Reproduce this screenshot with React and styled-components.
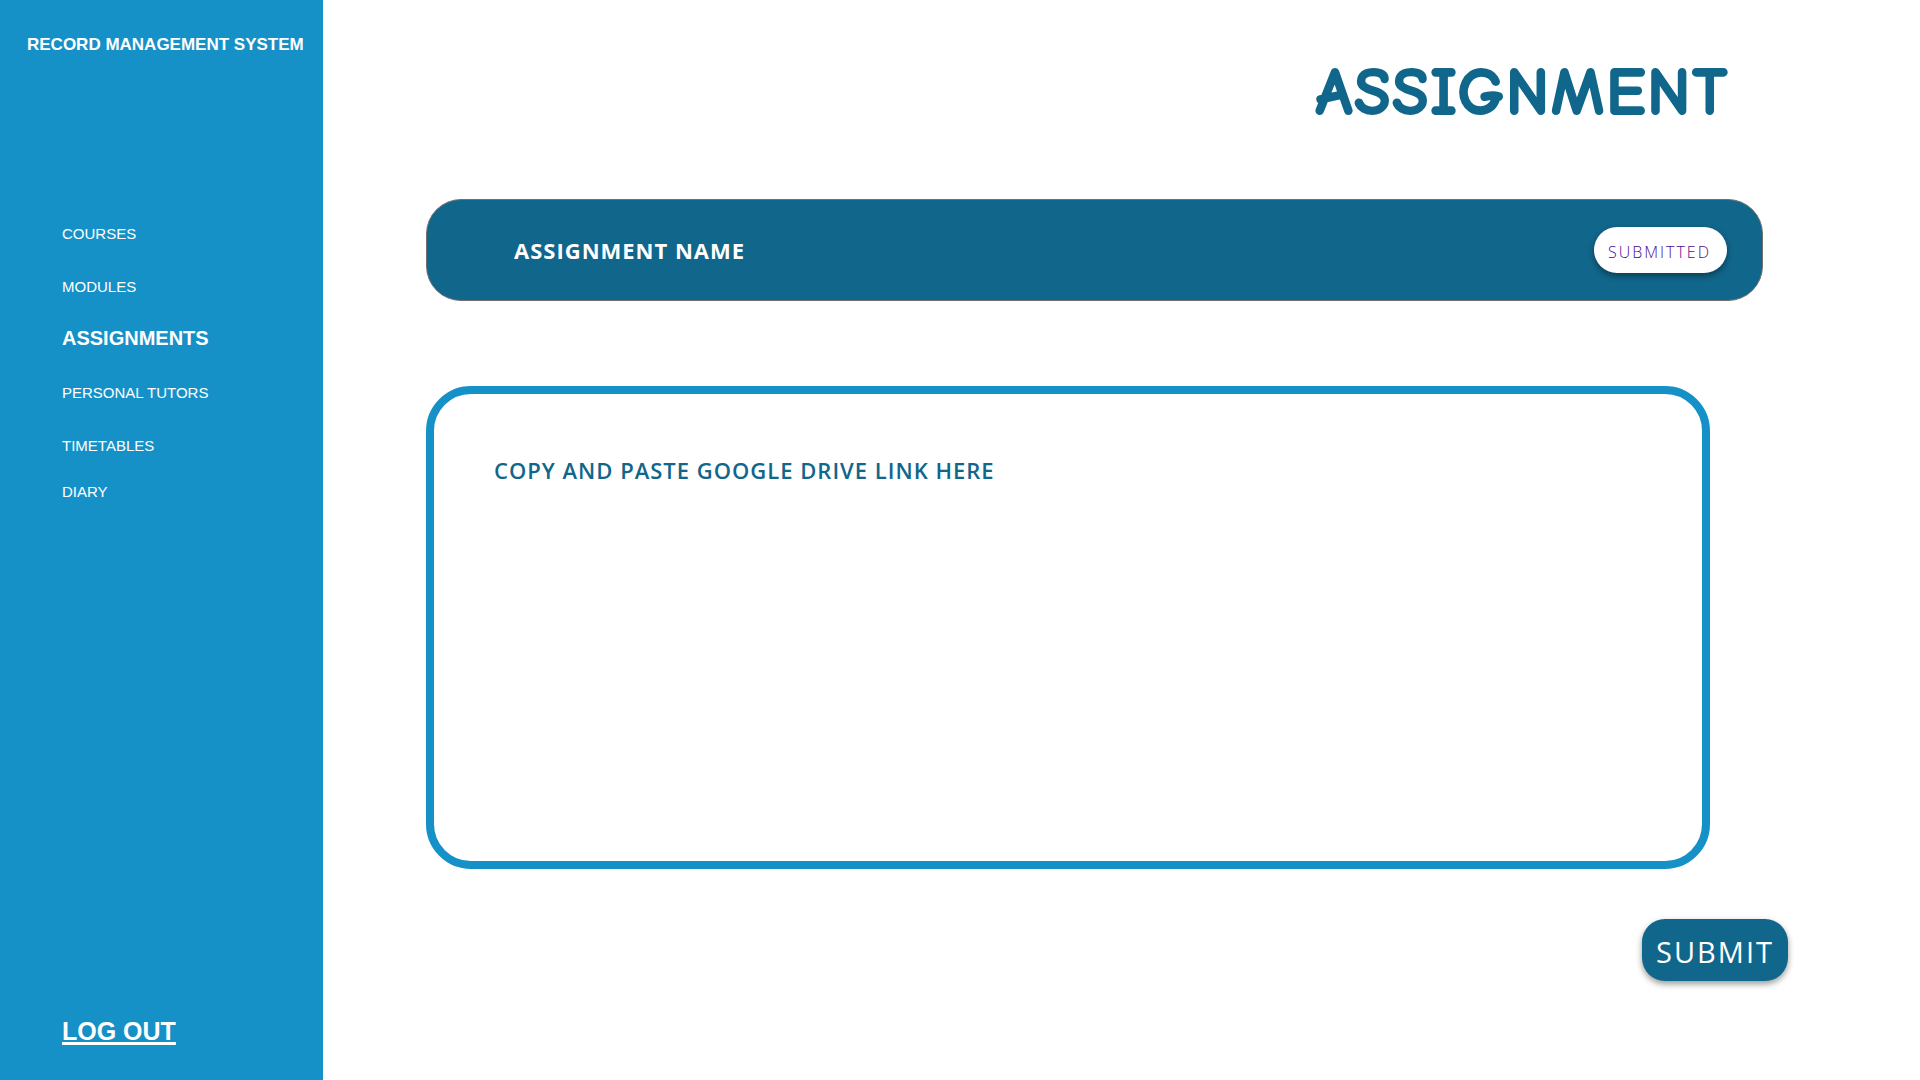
import React from "react";
import styled, { createGlobalStyle } from "styled-components";

const BLUE = "#1591c8";
const DEEP = "#11668b";
const SANS = `"Liberation Sans", Arial, sans-serif`;
const HUMANIST = `"Open Sans", "Noto Sans", sans-serif`;

const GlobalStyle = createGlobalStyle`
  *, *::before, *::after { box-sizing: border-box; }
  body { margin: 0; background: #fff; }
`;

const Page = styled.div`
  display: flex;
  min-height: 100vh;
`;

const Sidebar = styled.aside`
  display: flex;
  flex-direction: column;
  flex: 0 0 323px;
  padding: 33px 0;
  background: ${BLUE};
  color: #fff;
  font-family: ${SANS};
`;

const Brand = styled.div`
  padding-left: 27px;
  font-size: 17px;
  font-weight: 700;
  line-height: 24px;
  white-space: nowrap;
`;

const NavList = styled.ul`
  margin: 150px 0 0;
  padding: 0 0 0 62px;
  list-style: none;
`;

const NavItem = styled.li`
  font-size: 15px;
  line-height: ${(p) => (p.$compact ? "39px" : "53px")};
`;

const NavLink = styled.a`
  color: inherit;
  font-size: ${(p) => (p.$active ? "20px" : "15px")};
  font-weight: ${(p) => (p.$active ? 700 : 400)};
  line-height: 1;
  text-decoration: none;
`;

const LogOut = styled.a`
  align-self: flex-start;
  margin: auto 0 0 62px;
  color: inherit;
  font-size: 25px;
  font-weight: 700;
  line-height: 32px;
  text-decoration: underline;
  text-decoration-thickness: 3px;
  text-underline-offset: 2px;
  text-decoration-skip-ink: none;
`;

const Main = styled.main`
  display: flex;
  flex: 1;
  flex-direction: column;
  min-width: 0;
  padding: 51px 132px 48px 103px;
  font-family: ${HUMANIST};
`;

const Title = styled.h1`
  align-self: flex-end;
  margin: 0 59px 0 0;
  color: ${DEEP};
  font-family: "Comic Sans MS", "Comic Neue", ${HUMANIST};
  font-size: 66px;
  font-weight: 700;
  letter-spacing: 2px;
  line-height: 84px;
  -webkit-text-stroke: 2px ${DEEP};
`;

const AssignmentCard = styled.section`
  display: flex;
  align-items: center;
  justify-content: space-between;
  margin: 64px 25px 0 0;
  padding: 27px 35px 27px 87px;
  border: 1px solid #707070;
  border-radius: 35px;
  background: ${DEEP};
`;

const AssignmentName = styled.h2`
  margin: 0;
  color: #fff;
  font-size: 22px;
  font-weight: 700;
  letter-spacing: 1px;
  line-height: 32px;
`;

const Action = styled.button`
  border: 0;
  font-family: inherit;
  box-shadow: 0 3px 6px rgba(0, 0, 0, 0.4);
  cursor: pointer;
`;

const StatusButton = styled(Action)`
  padding: 4px 16px 0 14px;
  border-radius: 23px;
  background: #fff;
  color: #4d0a94;
  font-size: 16px;
  font-weight: 300;
  letter-spacing: 2px;
  line-height: 42px;
`;

const LinkField = styled.textarea`
  display: block;
  height: 483px;
  margin: 85px 78px 0 0;
  padding: 60px;
  border: 8px solid ${BLUE};
  border-radius: 45px;
  outline: 0;
  resize: none;
  background: #fff;
  color: ${DEEP};
  font-family: inherit;
  font-size: 22px;
  font-weight: 600;
  letter-spacing: 1px;
  line-height: 32px;

  &::placeholder {
    color: inherit;
    opacity: 1;
  }
`;

const SubmitButton = styled(Action)`
  align-self: flex-end;
  margin-top: 50px;
  padding: 4px 14px 0;
  border-radius: 23px;
  background: ${DEEP};
  color: #fff;
  font-size: 29px;
  font-weight: 400;
  letter-spacing: 2px;
  line-height: 58px;
`;

const links = [
  { label: "COURSES" },
  { label: "MODULES" },
  { label: "ASSIGNMENTS", active: true },
  { label: "PERSONAL TUTORS" },
  { label: "TIMETABLES" },
  { label: "DIARY", compact: true },
];

export default function App() {
  return (
    <>
      <GlobalStyle />
      <Page>
        <Sidebar>
          <Brand>RECORD MANAGEMENT SYSTEM</Brand>
          <nav>
            <NavList>
              {links.map(({ label, active, compact }) => (
                <NavItem key={label} $compact={compact}>
                  <NavLink href="#" $active={active} aria-current={active ? "page" : undefined}>
                    {label}
                  </NavLink>
                </NavItem>
              ))}
            </NavList>
          </nav>
          <LogOut href="#">LOG OUT</LogOut>
        </Sidebar>
        <Main>
          <Title>ASSIGNMENT</Title>
          <AssignmentCard>
            <AssignmentName>ASSIGNMENT NAME</AssignmentName>
            <StatusButton type="button">SUBMITTED</StatusButton>
          </AssignmentCard>
          <LinkField
            aria-label="Google Drive link"
            placeholder="COPY AND PASTE GOOGLE DRIVE LINK HERE"
          />
          <SubmitButton type="button">SUBMIT</SubmitButton>
        </Main>
      </Page>
    </>
  );
}
